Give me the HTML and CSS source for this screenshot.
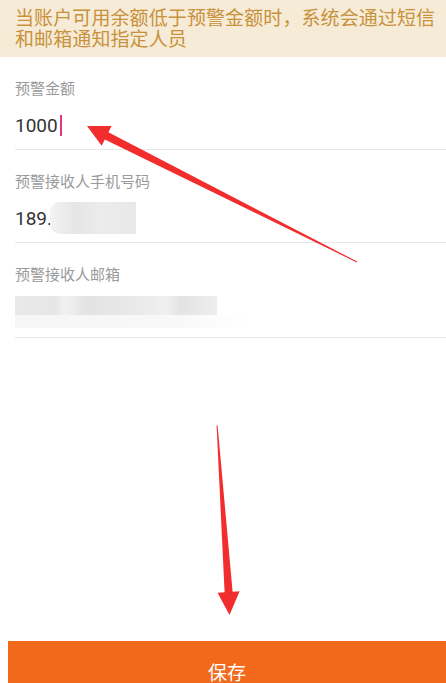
FILE: index.html
```html
<!DOCTYPE html>
<html lang="zh">
<head>
<meta charset="utf-8">
<link rel="stylesheet" href="styles.css">
</head>
<body>
<div class="page">
  <div class="notice">当账户可用余额低于预警金额时，系统会通过短信和邮箱通知指定人员</div>
  <div class="form">
    <div class="field">
      <div class="label">预警金额</div>
      <div class="value">1000<span class="caret"></span></div>
    </div>
    <div class="field">
      <div class="label">预警接收人手机号码</div>
      <div class="value">189.<span class="blur blur-phone"></span></div>
    </div>
    <div class="field">
      <div class="label">预警接收人邮箱</div>
      <div class="value value-mail">
        <span class="blur-mail-top"></span>
        <span class="blur-mail-bottom"></span>
      </div>
    </div>
  </div>
  <button class="save">保存</button>
  <svg class="arrows" width="446" height="683" viewBox="0 0 446 683">
    <polygon fill="#f22d2d" points="87,126 111.5,126.1 108.4,132.3 357.2,261.6 356.8,262.4 104.8,139.5 101.7,145.7"/>
    <polygon fill="#f22d2d" points="229.5,615 217.6,592.7 224.6,592.3 216.6,425.5 217.6,425.5 232.6,591.7 239.6,591.3"/>
  </svg>
</div>
</body>
</html>
```
FILE: styles.css
```css
html, body {
  margin: 0;
  padding: 0;
  background: #ffffff;
}
body {
  width: 446px;
  height: 683px;
  overflow: hidden;
  font-family: "Noto Sans CJK SC", "Noto Sans", sans-serif;
}
.page {
  position: relative;
  width: 446px;
  height: 683px;
  overflow: hidden;
}
.notice {
  box-sizing: border-box;
  height: 57px;
  background: #f6ebd6;
  color: #c8913c;
  font-size: 19px;
  line-height: 21px;
  padding: 6px 6px 0 15px;
  letter-spacing: 0.1px;
}
.form {
  padding-left: 15px;
}
.field {
  padding-top: 20px;
  padding-bottom: 9px;
  border-bottom: 1px solid #e6e6e6;
}
.label {
  font-size: 15px;
  line-height: 22px;
  color: #9a9a9a;
}
.value {
  margin-top: 11px;
  height: 30px;
  display: flex;
  align-items: center;
  font-family: Roboto, "Noto Sans", sans-serif;
  font-size: 19px;
  color: #333333;
}
.caret {
  display: inline-block;
  width: 2px;
  height: 21px;
  margin-left: 2px;
  background: #e4347f;
}
.blur-phone {
  display: inline-block;
  width: 86px;
  height: 32px;
  margin-left: -2px;
  border-radius: 10px 0 0 10px;
  background: linear-gradient(90deg, #f3f3f3 0%, #e6e6e6 30%, #ececec 60%, #e8e8e8 100%);
}
.value-mail {
  flex-direction: column;
  align-items: flex-start;
  justify-content: flex-end;
  height: 32px;
  margin-top: 11px;
}
.blur-mail-top {
  display: block;
  width: 202px;
  height: 19px;
  flex: none;
  background: linear-gradient(90deg, #e9e9e9 0%, #e6e6e6 20%, #f2f2f2 25%, #e3e3e3 35%, #e8e8e8 55%, #f0f0f0 75%, #e3e3e3 82%, #eeeeee 100%);
}
.blur-mail-bottom {
  display: block;
  width: 232px;
  height: 13px;
  flex: none;
  background: linear-gradient(90deg, #f6f6f6 0%, #f8f8f8 70%, #ffffff 100%);
}
.save {
  display: block;
  margin: 303px 0 0 8px;
  width: 438px;
  height: 62px;
  border: none;
  background: #f3691c;
  color: #ffffff;
  font-family: "Noto Sans CJK SC", sans-serif;
  font-size: 19px;
  line-height: 22px;
  padding: 0;
}
.arrows {
  position: absolute;
  left: 0;
  top: 0;
  pointer-events: none;
}
```
